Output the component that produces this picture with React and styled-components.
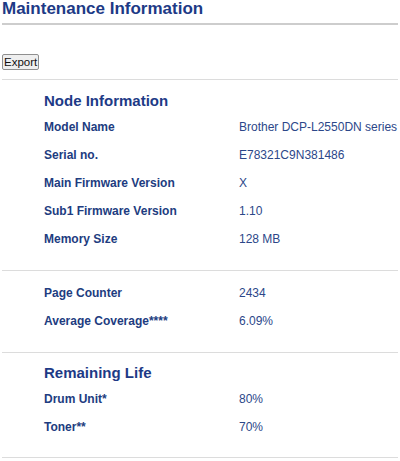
import styled, { createGlobalStyle } from 'styled-components';

const GlobalStyle = createGlobalStyle`
  html, body {
    margin: 0;
    padding: 0;
    background: #fff;
  }
  body {
    font-family: "Liberation Sans", Arial, sans-serif;
  }
`;

const Page = styled.div`
  margin: 0 2px;
  width: 396px;
`;

const Title = styled.h1`
  margin: 0;
  font-size: 17px;
  line-height: 18px;
  font-weight: bold;
  color: #1d3a86;
  padding-bottom: 5px;
  border-bottom: 2px solid #cdcdcd;
`;

const Toolbar = styled.div`
  padding: 29px 0 9px;
  border-bottom: 1px solid #dcdcdc;
  display: flex;
`;

const ExportButton = styled.button`
  font-family: "Liberation Sans", Arial, sans-serif;
  font-size: 11.5px;
  line-height: 14px;
  height: 16px;
  padding: 0 1px;
  margin: 0;
  color: #111;
  background: #efefef;
  border: 1px solid #8f8f8f;
  border-radius: 2px;
`;

const Section = styled.section`
  padding: ${(p) => p.$top}px 0 ${(p) => p.$bottom}px 42px;
  border-bottom: 1px solid #dcdcdc;
`;

const Heading = styled.h2`
  margin: 0 0 3px;
  font-size: 15px;
  line-height: 18px;
  font-weight: bold;
  color: #1d3a86;
`;

const Row = styled.div`
  display: grid;
  grid-template-columns: 195px 1fr;
  height: 28px;
  line-height: 28px;
  font-size: 12px;
  white-space: nowrap;
`;

const Label = styled.span`
  font-weight: bold;
  color: #213c80;
`;

const Value = styled.span`
  color: #2c4789;
`;

const sections = [
  {
    title: 'Node Information',
    top: 12,
    bottom: 17,
    rows: [
      ['Model Name', 'Brother DCP-L2550DN series'],
      ['Serial no.', 'E78321C9N381486'],
      ['Main Firmware Version', 'X'],
      ['Sub1 Firmware Version', '1.10'],
      ['Memory Size', '128 MB'],
    ],
  },
  {
    top: 8,
    bottom: 17,
    rows: [
      ['Page Counter', '2434'],
      ['Average Coverage****', '6.09%'],
    ],
  },
  {
    title: 'Remaining Life',
    top: 11,
    bottom: 16,
    rows: [
      ['Drum Unit*', '80%'],
      ['Toner**', '70%'],
    ],
  },
];

export default function App() {
  return (
    <>
      <GlobalStyle />
      <Page>
        <Title>Maintenance Information</Title>
        <Toolbar>
          <ExportButton type='button'>Export</ExportButton>
        </Toolbar>
        {sections.map((s, i) => (
          <Section key={i} $top={s.top} $bottom={s.bottom}>
            {s.title && <Heading>{s.title}</Heading>}
            {s.rows.map(([label, value]) => (
              <Row key={label}>
                <Label>{label}</Label>
                <Value>{value}</Value>
              </Row>
            ))}
          </Section>
        ))}
      </Page>
    </>
  );
}
